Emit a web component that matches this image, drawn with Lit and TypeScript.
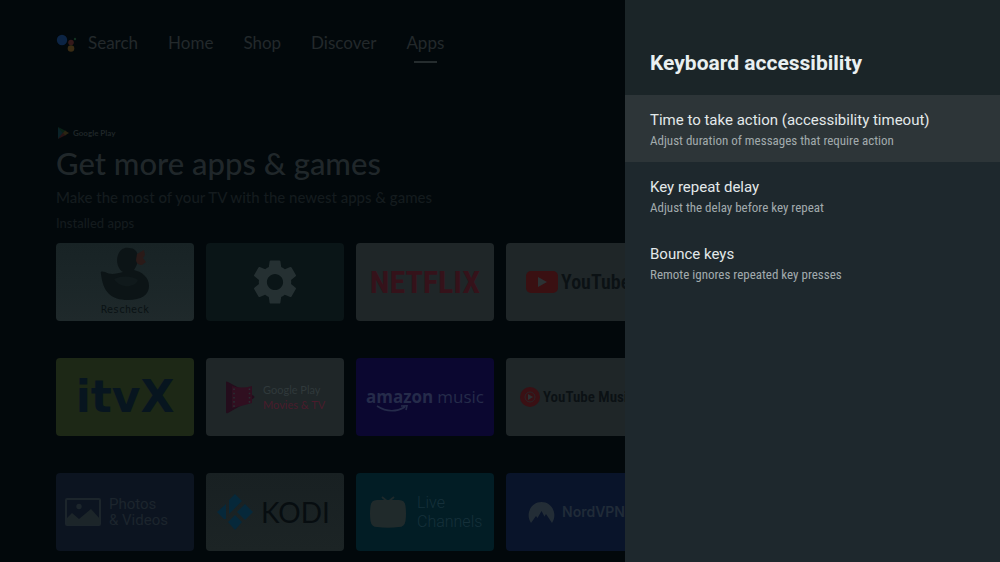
import { LitElement, html, css } from "lit";
import { customElement, property, state } from "lit/decorators.js";

const icons: Record<string, unknown> = {
  duck: html`<svg class="art" width="50" height="54" viewBox="0 0 50 54" aria-hidden="true">
    <path fill="#0c1416" d="M1 28C0 25 2 25 5 26C10 29 16 28 23 26C17 22 16 14 18 9C20 3 25 1 29 2C35 2 38 6 38 12C38 17 36 21 34 24C42 26 49 31 49 40C49 49 41 54 28 54C11 54 3 46 1 28Z" />
    <path fill="#2a1a18" d="M37 8L44 4L45 9L43 12L46 16L42 19C39 19 36 17 36 14Z" />
    <path fill="#10191b" d="M14 33C22 29 33 30 38 34C35 42 20 43 14 33Z" />
  </svg>`,
  gear: html`<svg class="art" width="54" height="54" viewBox="0 0 24 24" aria-hidden="true">
    <path fill="#253032" d="M19.14 12.94c.04-.3.06-.61.06-.94 0-.32-.02-.64-.07-.94l2.03-1.58c.18-.14.23-.41.12-.61l-1.92-3.32c-.12-.22-.37-.29-.59-.22l-2.39.96c-.5-.38-1.03-.7-1.62-.94l-.36-2.54c-.04-.24-.24-.41-.48-.41h-3.84c-.24 0-.43.17-.47.41l-.36 2.54c-.59.24-1.13.57-1.62.94l-2.39-.96c-.22-.08-.47 0-.59.22L2.74 8.87c-.12.21-.08.47.12.61l2.03 1.58c-.05.3-.09.63-.09.94s.02.64.07.94l-2.03 1.58c-.18.14-.23.41-.12.61l1.92 3.32c.12.22.37.29.59.22l2.39-.96c.5.38 1.03.7 1.62.94l.36 2.54c.05.24.24.41.48.41h3.84c.24 0 .44-.17.47-.41l.36-2.54c.59-.24 1.13-.56 1.62-.94l2.39.96c.22.08.47 0 .59-.22l1.92-3.32c.12-.22.07-.47-.12-.61l-2.01-1.58zM12 15.6c-1.98 0-3.6-1.62-3.6-3.6s1.62-3.6 3.6-3.6 3.6 1.62 3.6 3.6-1.62 3.6-3.6 3.6z" />
  </svg>`,
  youtube: html`<svg class="art" width="32" height="22" viewBox="0 0 32 22" aria-hidden="true">
    <rect width="32" height="22" rx="5" fill="#3a1012" /><path fill="#2c3234" d="M12 6L21 11L12 16Z" />
  </svg>`,
  ytmusic: html`<svg class="art" width="20" height="20" viewBox="0 0 20 20" aria-hidden="true">
    <circle cx="10" cy="10" r="10" fill="#3a1014" /><circle cx="10" cy="10" r="5" fill="none" stroke="#2b2528" />
    <path fill="#2c3234" d="M8 7L13 10L8 13Z" />
  </svg>`,
  movies: html`<svg class="art" width="29" height="33" viewBox="0 0 29 33" aria-hidden="true">
    <path fill="#240d1c" d="M0 1Q0 0 2 1L28 15Q29 16 28 17L2 32Q0 33 0 31Z" />
    <path fill="#300f20" d="M6 5Q16 8 26 5V22Q16 25 6 27Z" />
    <path stroke="#292c32" stroke-width="1.6" stroke-dasharray="1.6 2.6" d="M8 7.500V26M23.500 7.500V22" />
  </svg>`,
  photos: html`<svg class="art" width="36" height="28" viewBox="0 0 36 28" aria-hidden="true">
    <rect x="1" y="1" width="34" height="26" rx="1" fill="none" stroke="#1c252b" stroke-width="2" />
    <circle cx="14" cy="8.500" r="2.700" fill="#1c252b" />
    <path fill="#1c2529" d="M2 20L7 15L14 21L26 11L35 21V27H2Z" />
  </svg>`,
  kodi: html`<svg class="art" width="36" height="36" viewBox="0 0 36 36" aria-hidden="true">
    <path fill="#06283a" d="M18 0L25 7L12 20V6ZM9 10V25L7 25L0 18ZM28 10L36 18L28 26L20 18ZM18 21L25 28L18 36L11 28Z" />
  </svg>`,
  live: html`<svg class="art" width="36" height="32" viewBox="0 0 36 32" aria-hidden="true">
    <path fill="none" stroke="#1d292b" stroke-width="2" d="M12 1L18 6L24 1" />
    <path fill="#202a2b" d="M7 4H29Q35 4 35.500 10Q36.500 18 35.500 25Q34.500 31 29 31Q18 32.500 7 31Q1.500 31 .500 25Q-.500 18 .500 10Q1 4 7 4Z" />
  </svg>`,
  nord: html`<svg class="art" width="27" height="21" viewBox="0 0 27 21" aria-hidden="true">
    <path fill="#232d36" d="M3 21C-3 12 3 0 13.500 0S30 12 24 21L18 12L16.500 14.500L17.200 16L13.500 9L9.500 16L8 14Z" />
  </svg>`,
};

interface App {
  id: string;
  name: string;
  lines?: unknown;
}

const apps: App[] = [
  { id: "duck", name: "Rescheck", lines: "Rescheck" },
  { id: "gear", name: "Settings" },
  { id: "netflix", name: "Netflix", lines: "NETFLIX" },
  { id: "youtube", name: "YouTube", lines: "YouTube" },
  { id: "itvx", name: "ITVX", lines: "itvX" },
  { id: "movies", name: "Google Play Movies & TV", lines: html`<span>Google Play</span><span class="rose">Movies &amp; TV</span>` },
  {
    id: "amazon",
    name: "Amazon Music",
    lines: html`<b class="brand">amazon<svg class="smile" width="34" height="8" viewBox="0 0 34 8" aria-hidden="true">
      <path fill="none" stroke="#252b4a" stroke-width="1.600" d="M1 1Q15 10 29 2M25 1L31 .800L30 5" /></svg></b><span>music</span>`,
  },
  { id: "ytmusic", name: "YouTube Music", lines: "YouTube Music" },
  { id: "photos", name: "Photos & Videos", lines: html`<span>Photos</span><span>&amp; Videos</span>` },
  { id: "kodi", name: "Kodi", lines: "KODI" },
  { id: "live", name: "Live Channels", lines: html`<span>Live</span><span>Channels</span>` },
  { id: "nord", name: "NordVPN", lines: "NordVPN" },
];

@customElement("app-tile")
class AppTile extends LitElement {
  @property({ attribute: false }) app!: App;

  static styles = css`
    :host { display: block; }
    .tile {
      display: flex; align-items: center; justify-content: flex-start;
      box-sizing: border-box; width: 100%; height: 78px; margin: 0; border: 0; border-radius: 4px;
      padding: 0; overflow: hidden; background: #1f2628; color: #0b1114;
      font: 400 12px/16px Roboto, "Open Sans", sans-serif; text-align: left; white-space: nowrap;
    }
    .art { display: block; flex: none; }
    .label { display: flex; flex-direction: column; }
    .duck { flex-direction: column; justify-content: flex-start; padding-top: 3px; color: #0a1214;
      background: linear-gradient(#182325, #1b2628 50%, #1f292b);
      font: 400 10px/16px "DejaVu Sans Mono", monospace; gap: 2px; }
    .gear { justify-content: center; background: #0a1517; }
    .netflix { justify-content: center; color: #35121a; font-weight: 700; font-size: 32px; line-height: 40px;
      font-family: "Roboto Condensed", Roboto, sans-serif; }
    .youtube { padding-left: 20px; gap: 3px; font-weight: 600; font-size: 20px; line-height: 24px;
      font-family: "Roboto Condensed", Roboto, sans-serif; }
    .ytmusic { padding-left: 14px; gap: 3px; font-weight: 600; font-size: 15px; line-height: 24px;
      font-family: "Roboto Condensed", Roboto, sans-serif; }
    .itvx { justify-content: center; background: #1d2816; color: #07151f; font-weight: 700; font-size: 44px; line-height: 52px; font-family: "DejaVu Sans", sans-serif; }
    .movies { padding-left: 20px; gap: 8px; color: #30393b; font-size: 11px; font-family: Lato, sans-serif; line-height: 15px; }
    .rose { color: #4a1c2c; }
    .amazon { justify-content: center; background: #0b0730; color: #252b4a; font-size: 17px; line-height: 24px; font-family: "Open Sans", sans-serif; }
    .amazon .label { flex-direction: row; gap: 4px; }
    .brand { position: relative; font-weight: 700; }
    .smile { position: absolute; left: 10px; top: 20px; }
    .photos { padding-left: 9px; gap: 8px; background: #0c1420; color: #1c252d; font-size: 15px; line-height: 16px; }
    .kodi { padding-left: 11px; gap: 8px; background: linear-gradient(#182022, #1c2425); color: #070d10; font-size: 28px; line-height: 32px; font-family: Lato, sans-serif; }
    .live { padding-left: 14px; gap: 11px; background: #021d25; color: #15303a; font-weight: 300; font-size: 16px; line-height: 19px; }
    .nord { padding-left: 22px; gap: 7px; background: #09142a; color: #202b38; font-weight: 600; font-size: 14px; font-family: Inter, sans-serif; }
  `;

  render() {
    const { id, name, lines } = this.app;
    return html`<button class="tile ${id}" aria-label=${name}>
      ${icons[id] ?? ""}${lines ? html`<span class="label">${lines}</span>` : ""}
    </button>`;
  }
}

@customElement("settings-panel")
class SettingsPanel extends LitElement {
  @state() private selected = 0;

  private items = [
    ["Time to take action (accessibility timeout)", "Adjust duration of messages that require action"],
    ["Key repeat delay", "Adjust the delay before key repeat"],
    ["Bounce keys", "Remote ignores repeated key presses"],
  ];

  static styles = css`
    :host { display: block; background: #1e282d; font-family: Roboto, sans-serif; }
    .title { margin: 0; padding: 49px 25px 18px; background: #1b2528; color: #e9f0f1; font-weight: 700; font-size: 21px; line-height: 28px; }
    .item { display: flex; flex-direction: column; width: 100%; margin: 0; border: 0; padding: 14px 25px 11px; background: none;
      color: #e3e9ea; font: 400 15px/22px Roboto, sans-serif; text-align: left; }
    .on { background: #2d3538; }
    .note { color: #a2abad; font: 400 13px/20px "Roboto Condensed", Roboto, sans-serif; }
  `;

  render() {
    return html`<h2 class="title">Keyboard accessibility</h2>
      ${this.items.map(
        ([name, note], i) => html`<button class="item ${i === this.selected ? "on" : ""}" @click=${() => (this.selected = i)}>
          <span>${name}</span><span class="note">${note}</span>
        </button>`
      )}`;
  }
}

@customElement("app-root")
class AppRoot extends LitElement {
  static styles = css`
    :host { display: block; position: relative; height: 100vh; overflow: hidden; background: #02080b; font-family: Lato, sans-serif; color: #1f2628; }
    .home { padding: 32px 56px 0; }
    .nav { display: flex; align-items: center; gap: 30px; margin-bottom: 73px; font-size: 17px; line-height: 22px; }
    .link { position: relative; display: flex; align-items: center; gap: 11px; color: #23292b; text-decoration: none; }
    .current::after { content: ""; position: absolute; left: 50%; bottom: -9px; width: 23px; height: 2px; margin-left: -11px; background: #252c2e; }
    .store { display: flex; align-items: center; gap: 4px; margin-bottom: 4px; font-size: 8px; line-height: 12px; font-weight: 700; }
    .headline { margin: 0 0 3px; font-weight: 500; font-size: 31px; line-height: 40px; color: #20272a; }
    .lead { margin: 0 0 6px; font-weight: 500; font-size: 15px; line-height: 22px; color: #141b1e; }
    .section { margin: 0 0 11px; font-weight: 500; font-size: 13px; line-height: 18px; color: #141b1e; }
    .grid { display: grid; grid-template-columns: repeat(4, 138px); gap: 37px 12px; }
    .panel { position: absolute; top: 0; right: 0; bottom: 0; width: 37.5%; }
  `;

  render() {
    return html`<main class="home">
        <nav class="nav">
          <a class="link" href="#search"><svg width="21" height="20" viewBox="0 0 21 20" aria-hidden="true">
            <circle cx="6" cy="7" r="5.200" fill="#0c2444" /><circle cx="15" cy="9.500" r="2.800" fill="#34191a" />
            <circle cx="15" cy="15.500" r="3.300" fill="#3a2c14" /><circle cx="19" cy="6" r="1.200" fill="#123020" />
          </svg>Search</a>
          <a class="link" href="#home">Home</a>
          <a class="link" href="#shop">Shop</a>
          <a class="link" href="#discover">Discover</a>
          <a class="link current" href="#apps" aria-current="page">Apps</a>
        </nav>
        <div class="store"><svg width="13" height="12" viewBox="0 0 13 12" aria-hidden="true">
          <path fill="#0a2228" d="M2 0L8 6L2 12Z" /><path fill="#0a2216" d="M2 0L10 4L7 6.500Z" />
          <path fill="#281315" d="M2 12L10 8L7 5.500Z" /><path fill="#2a2412" d="M9 3.500L13 6L9 8.500L7 6Z" />
        </svg>Google Play</div>
        <h1 class="headline">Get more apps &amp; games</h1>
        <p class="lead">Make the most of your TV with the newest apps &amp; games</p>
        <h2 class="section">Installed apps</h2>
        <div class="grid">${apps.map((app) => html`<app-tile .app=${app}></app-tile>`)}</div>
      </main>
      <settings-panel class="panel"></settings-panel>`;
  }
}
